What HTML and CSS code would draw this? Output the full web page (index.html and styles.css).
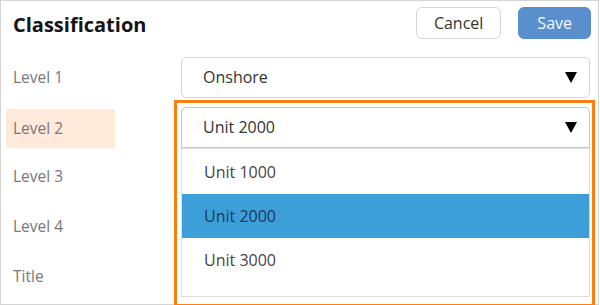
FILE: index.html
```html
<!DOCTYPE html>
<html>
<head>
    <title>Classification</title>
    <link rel="stylesheet" href="styles.css">
</head>
<body>
    <div class="panel">
        <div class="header">
            <h1>Classification</h1>
            <div class="actions">
                <button class="btn">Cancel</button>
                <button class="btn btn-primary">Save</button>
            </div>
        </div>

        <div class="form">
            <div class="label">Level 1</div>
            <div class="field">
                <div class="select">
                    <span>Onshore</span>
                    <svg class="arrow" width="12" height="11" viewBox="0 0 12 11"><polygon points="0,0 12,0 6,11" fill="#000"/></svg>
                </div>
            </div>

            <div class="label label-active">Level 2</div>
            <div class="field field-open">
                <div class="select select-focus">
                    <span>Unit 2000</span>
                    <svg class="arrow" width="12" height="11" viewBox="0 0 12 11"><polygon points="0,0 12,0 6,11" fill="#000"/></svg>
                </div>
                <ul class="menu">
                    <li>Unit 1000</li>
                    <li class="selected">Unit 2000</li>
                    <li>Unit 3000</li>
                </ul>
            </div>

            <div class="label">Level 3</div>
            <div class="field"></div>

            <div class="label">Level 4</div>
            <div class="field"></div>

            <div class="label">Title</div>
            <div class="field"></div>
        </div>
    </div>
</body>
</html>
```

FILE: styles.css
```css
:root {
    --border: #d4d4d4;
    --label: #787878;
    --text: #333333;
    --primary: #5a8fcd;
    --highlight: #3d9fda;
    --accent: #ff7f0e;
    --radius: 5px;
}

* {
    box-sizing: border-box;
}

body {
    margin: 0;
    font-family: "Open Sans", "Noto Sans", sans-serif;
    background: #ffffff;
}

.panel {
    position: relative;
    width: 599px;
    height: 305px;
    border: 1px solid var(--border);
}

.header {
    display: flex;
    justify-content: space-between;
    align-items: flex-start;
    height: 51px;
    padding: 6px 7px 0 12px;
}

h1 {
    margin: 0;
    font-size: 20px;
    font-weight: 700;
    line-height: 32px;
    padding-top: 2px;
    color: #141414;
}

.actions {
    display: flex;
    gap: 17px;
}

.btn {
    height: 32px;
    padding: 0 17px;
    border: 1px solid var(--border);
    border-radius: 6px;
    background: #ffffff;
    color: var(--text);
    font-family: inherit;
    font-size: 16px;
}

.btn-primary {
    background: var(--primary);
    border-color: var(--primary);
    color: #f4f8fc;
    padding: 0 18px;
}

.form {
    display: grid;
    grid-template-columns: 109px 1fr;
    grid-template-rows: 50px 50px 49px 50px 50px;
    column-gap: 66px;
    padding: 0 8px 0 5px;
}

.label {
    align-self: center;
    height: 39px;
    line-height: 39px;
    padding-left: 7px;
    font-size: 15.5px;
    color: var(--label);
}

.label-active {
    background: #fee9da;
    margin-top: 3px;
}

.field {
    align-self: center;
}

.select {
    display: flex;
    justify-content: space-between;
    align-items: center;
    height: 41px;
    padding: 0 12px 0 21px;
    border: 1px solid var(--border);
    border-radius: var(--radius);
    background: #ffffff;
    font-size: 16px;
    color: var(--text);
}

.select-focus {
    border-color: #a9cbeb;
    border-bottom-left-radius: 0;
    border-bottom-right-radius: 0;
}

.field-open {
    position: relative;
}

.field-open::after {
    content: "";
    position: absolute;
    top: -7px;
    left: -7px;
    right: -5px;
    height: 201px;
    border: 3px solid var(--accent);
    pointer-events: none;
}

.menu {
    position: absolute;
    top: 100%;
    left: 0;
    right: 0;
    margin: 0;
    padding: 1px 0 14px;
    list-style: none;
    background: #ffffff;
    border: 1px solid #dddddd;
    border-top-color: #e4e4e4;
}

.menu li {
    height: 44px;
    line-height: 44px;
    padding-left: 22px;
    font-size: 16px;
    color: #444444;
}

.menu li.selected {
    background: var(--highlight);
    color: #1b3a57;
}
```
